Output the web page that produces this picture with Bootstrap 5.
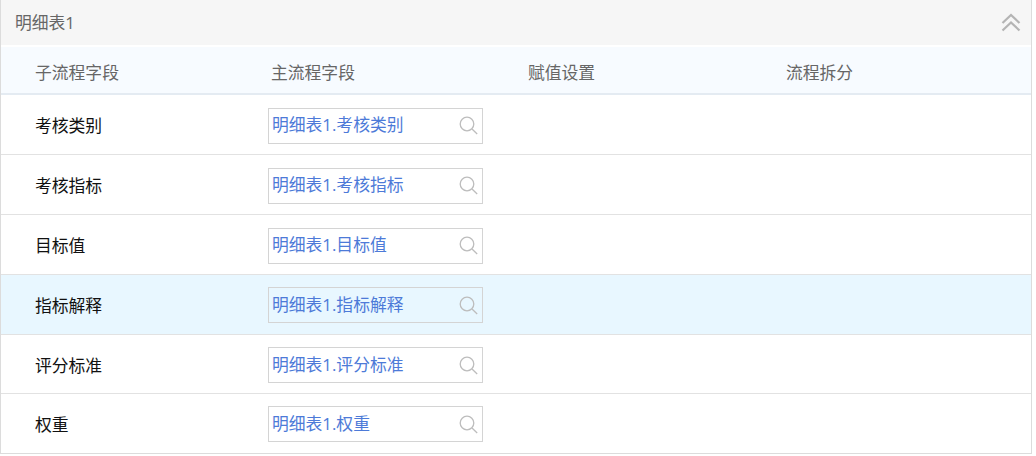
<!DOCTYPE html>
<html lang="zh-CN">
<head>
<meta charset="utf-8">
<title>明细表1</title>
<link href="https://cdn.jsdelivr.net/npm/bootstrap@5.3.0/dist/css/bootstrap.min.css" rel="stylesheet">
<style>
html,body{margin:0;background:#fff;overflow:hidden}
body{font-family:"Open Sans","Noto Sans CJK SC",sans-serif;font-size:16.8px;width:1032px;height:456px}
.detail-panel{border:solid #dcdcdc;border-width:0 1px 1px 1px;height:454.2px;display:flex;flex-direction:column}
.detail-head{height:45.2px;background:#f6f6f6;color:#666;padding-left:14px;flex:none;margin-bottom:2px}
.head-chevron{margin-right:10px;flex:none}
.field-grid{display:grid;grid-template-columns:267px 260px 258px 1fr;align-items:center}
.field-columns{height:48px;background:#f7fbff;border-bottom:2px solid #e4ebf2;color:#666;flex:none;padding-top:4px}
.field-columns span:first-child,.field-row>span{padding-left:34px}
.field-columns span:nth-child(2){padding-left:3px}
.field-row{flex:none;height:59.84px;border-bottom:1px solid #e2e2e2;color:#111;padding-top:2.5px}
.field-row:last-child{border-bottom:0;padding-top:0}
.field-row.is-active{background:#e8f7ff}
.lookup{width:215px;height:36px;border:1px solid #d4d4d4;color:#4d7ad8;padding-left:3px;padding-right:4px}
.lookup span{padding-bottom:2px}
.lookup svg{flex:none}
</style>
</head>
<body>
<div class="detail-panel">
  <div class="detail-head d-flex align-items-center justify-content-between">
    <span>明细表1</span>
    <svg class="head-chevron" width="20" height="19" viewBox="0 0 20 19" fill="none" stroke="#b4b4b4" stroke-width="2.2"><path d="M1.5 10 10 2l8.5 8M1.5 17.5 10 9.5l8.5 8"/></svg>
  </div>
  <div class="field-columns field-grid"><span>子流程字段</span><span>主流程字段</span><span>赋值设置</span><span>流程拆分</span></div>
  <div class="field-row field-grid"><span>考核类别</span><div class="lookup d-flex align-items-center justify-content-between"><span>明细表1.考核类别</span><svg width="19" height="19" viewBox="0 0 19 19" fill="none" stroke="#bdbdbd" stroke-width="1.3"><circle cx="8" cy="8" r="6.8"/><path d="m13 13 5.2 5"/></svg></div></div>
  <div class="field-row field-grid"><span>考核指标</span><div class="lookup d-flex align-items-center justify-content-between"><span>明细表1.考核指标</span><svg width="19" height="19" viewBox="0 0 19 19" fill="none" stroke="#bdbdbd" stroke-width="1.3"><circle cx="8" cy="8" r="6.8"/><path d="m13 13 5.2 5"/></svg></div></div>
  <div class="field-row field-grid"><span>目标值</span><div class="lookup d-flex align-items-center justify-content-between"><span>明细表1.目标值</span><svg width="19" height="19" viewBox="0 0 19 19" fill="none" stroke="#bdbdbd" stroke-width="1.3"><circle cx="8" cy="8" r="6.8"/><path d="m13 13 5.2 5"/></svg></div></div>
  <div class="field-row field-grid is-active"><span>指标解释</span><div class="lookup d-flex align-items-center justify-content-between"><span>明细表1.指标解释</span><svg width="19" height="19" viewBox="0 0 19 19" fill="none" stroke="#bdbdbd" stroke-width="1.3"><circle cx="8" cy="8" r="6.8"/><path d="m13 13 5.2 5"/></svg></div></div>
  <div class="field-row field-grid"><span>评分标准</span><div class="lookup d-flex align-items-center justify-content-between"><span>明细表1.评分标准</span><svg width="19" height="19" viewBox="0 0 19 19" fill="none" stroke="#bdbdbd" stroke-width="1.3"><circle cx="8" cy="8" r="6.8"/><path d="m13 13 5.2 5"/></svg></div></div>
  <div class="field-row field-grid"><span>权重</span><div class="lookup d-flex align-items-center justify-content-between"><span>明细表1.权重</span><svg width="19" height="19" viewBox="0 0 19 19" fill="none" stroke="#bdbdbd" stroke-width="1.3"><circle cx="8" cy="8" r="6.8"/><path d="m13 13 5.2 5"/></svg></div></div>
</div>
<script src="https://cdn.jsdelivr.net/npm/bootstrap@5.3.0/dist/js/bootstrap.bundle.min.js"></script>
</body>
</html>
